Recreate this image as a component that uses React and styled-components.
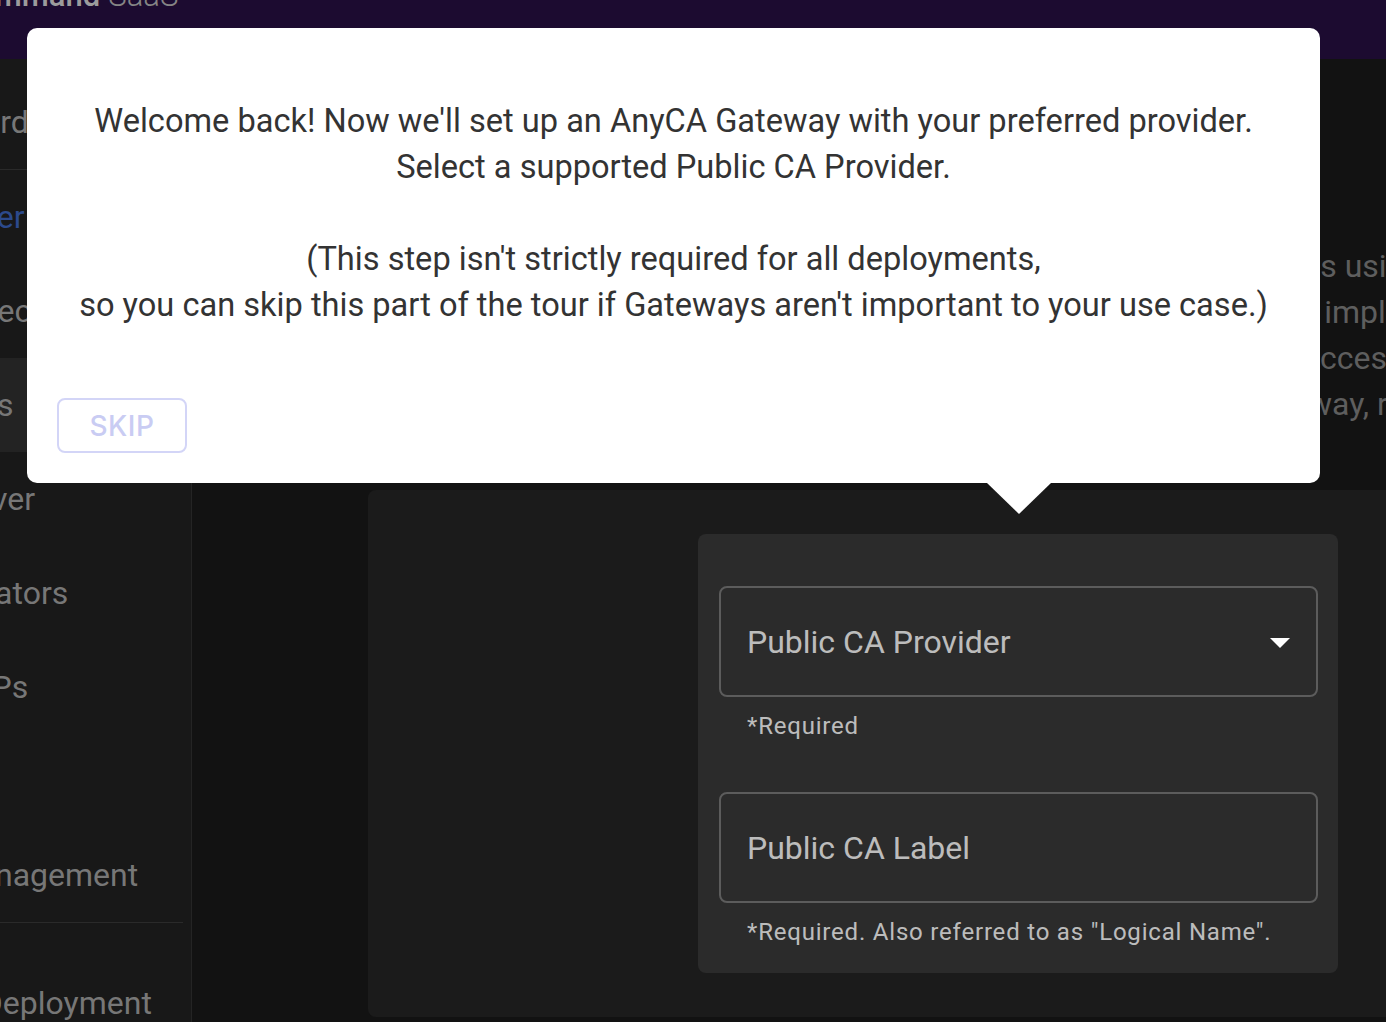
import React, { useLayoutEffect, useRef } from "react";
import styled, { createGlobalStyle } from "styled-components";

const GlobalStyle = createGlobalStyle`
  html, body { margin: 0; padding: 0; background: #121212; }
  body { font-family: Roboto, "Liberation Sans", sans-serif; }
  * { box-sizing: border-box; }
`;

const Viewport = styled.div`
  width: 100vw;
  height: 100vh;
  overflow: hidden;
  position: relative;
  background: #121212;
`;

const Page = styled.div`
  width: 1760px;
  min-height: 1100px;
  display: flex;
  flex-direction: column;
`;

const AppBar = styled.header`
  height: 128px;
  flex-shrink: 0;
  background: #1c0b30;
  display: flex;
  align-items: center;
  padding-left: 99px;
  font-family: Roboto, sans-serif;
  font-size: 31px;
`;

const BrandStrong = styled.span`
  font-weight: 500;
  color: #9c9c9c;
`;

const BrandLight = styled.span`
  font-weight: 300;
  color: #858585;
  margin-left: 8px;
`;

const Body = styled.div`
  display: flex;
  flex: 1;
`;

const Sidebar = styled.nav`
  width: 334px;
  flex-shrink: 0;
  background: #181818;
  border-right: 1px solid #242424;
  padding-top: 16px;
  display: flex;
  flex-direction: column;
`;

const NavItem = styled.div`
  height: 94px;
  display: flex;
  align-items: center;
  padding-left: 16px;
  font-size: 32px;
  white-space: nowrap;
  color: ${(p) => (p.$accent ? "#2c4a8c" : "#777777")};
  background: ${(p) => (p.$active ? "#232323" : "transparent")};
`;

const NavDivider = styled.hr`
  border: none;
  height: 1px;
  background: #2a2a2a;
  margin: 0 8px 0 0;
`;

const NavSection = styled.div`
  padding-top: 33px;
  display: flex;
  flex-direction: column;
`;

const Main = styled.main`
  flex: 1;
  background: #121212;
  padding: 64px 176px 0 176px;
  min-width: 0;
`;

const PageTitle = styled.h1`
  margin: 0;
  font-size: 48px;
  line-height: 72px;
  font-weight: 400;
  color: #8a8a8a;
`;

const Lead = styled.p`
  margin: 48px 0 0 0;
  font-size: 32px;
  line-height: 46px;
  color: #5e5e5e;
`;

const LeadLine = styled.span`
  display: block;
  white-space: nowrap;
`;

const Card = styled.section`
  margin-top: 63px;
  background: #1b1b1b;
  border-radius: 8px;
  padding: 44px 0;
  display: grid;
  grid-template-columns: 330px 640px 1fr;
`;

const FormCard = styled.div`
  grid-column: 2;
  background: #2b2b2b;
  border-radius: 8px;
  padding: 52px 20px 21px 21px;
  display: flex;
  flex-direction: column;
  gap: 46px;
`;

const FieldGroup = styled.div`
  display: flex;
  flex-direction: column;
`;

const Field = styled.div`
  height: 111px;
  border: 2px solid rgba(255, 255, 255, 0.23);
  border-radius: 8px;
  display: flex;
  align-items: center;
  justify-content: space-between;
  padding: 0 12px 0 26px;
  font-size: 32px;
  color: rgba(255, 255, 255, 0.7);
`;

const Helper = styled.div`
  margin: 9px 0 0 28px;
  font-size: 24px;
  line-height: 40px;
  letter-spacing: 0.8px;
  color: rgba(255, 255, 255, 0.7);
`;

const Tooltip = styled.div`
  position: fixed;
  top: 28px;
  left: 27px;
  width: 1293px;
  background: #ffffff;
  border-radius: 10px;
  padding: 30px;
  font-family: Roboto, sans-serif;
`;

const TooltipBody = styled.div`
  padding: 40px 10px;
  text-align: center;
  font-size: 32.6px;
  line-height: 46px;
  color: #333333;
`;

const TooltipLine = styled.span`
  display: block;
  white-space: nowrap;
  min-height: 46px;
`;

const TooltipFooter = styled.div`
  margin-top: 30px;
  display: flex;
`;

const SkipButton = styled.button`
  width: 130px;
  height: 55px;
  border: 2px solid #d3d5f7;
  border-radius: 8px;
  background: transparent;
  color: #c9ccf3;
  font-family: Inter, sans-serif;
  font-size: 28px;
  font-weight: 500;
  letter-spacing: 0.5px;
  padding: 0;
`;

const Arrow = styled.span`
  position: absolute;
  top: 100%;
  left: 960px;
  width: 0;
  height: 0;
  border-left: 32px solid transparent;
  border-right: 32px solid transparent;
  border-top: 31px solid #ffffff;
`;

const DropIcon = () => (
  <svg width="48" height="48" viewBox="0 0 24 24" fill="#ffffff">
    <path d="M7 10l5 5 5-5z" />
  </svg>
);

export default function App() {
  const ref = useRef(null);
  useLayoutEffect(() => {
    if (ref.current) {
      ref.current.scrollLeft = 142;
      ref.current.scrollTop = 69;
    }
  }, []);

  return (
    <>
      <GlobalStyle />
      <Viewport ref={ref}>
        <Page>
          <AppBar>
            <BrandStrong>Command</BrandStrong>
            <BrandLight>SaaS</BrandLight>
          </AppBar>
          <Body>
            <Sidebar>
              <NavItem>Dashboard</NavItem>
              <NavDivider />
              <NavItem $accent>PKI Center</NavItem>
              <NavItem>SSH Collections</NavItem>
              <NavItem $active>Gateways</NavItem>
              <NavItem>Web Server</NavItem>
              <NavItem>Orchestrators</NavItem>
              <NavItem>HSM CSPs</NavItem>
              <NavItem>Reports</NavItem>
              <NavItem>Alert Management</NavItem>
              <NavDivider />
              <NavSection>
                <NavItem>Staged Deployment</NavItem>
              </NavSection>
            </Sidebar>
            <Main>
              <PageTitle>Gateways</PageTitle>
              <Lead>
                <LeadLine>Connect Keyfactor Command to trusted public certificate authorities using a Gateway</LeadLine>
                <LeadLine>an AnyCA Gateway. Gateways give one standard, consistent way to implement certificate</LeadLine>
                <LeadLine>issuance across providers, with a unified point for audited, secure access to issuance</LeadLine>
                <LeadLine>to every connected CA. When you finish setting up the AnyCA Gateway, return here.</LeadLine>
              </Lead>
              <Card>
                <FormCard>
                  <FieldGroup>
                    <Field>
                      <span>Public CA Provider</span>
                      <DropIcon />
                    </Field>
                    <Helper>*Required</Helper>
                  </FieldGroup>
                  <FieldGroup>
                    <Field>
                      <span>Public CA Label</span>
                    </Field>
                    <Helper>*Required. Also referred to as "Logical Name".</Helper>
                  </FieldGroup>
                </FormCard>
              </Card>
            </Main>
          </Body>
        </Page>
        <Tooltip>
          <TooltipBody>
            <TooltipLine>Welcome back! Now we'll set up an AnyCA Gateway with your preferred provider.</TooltipLine>
            <TooltipLine>Select a supported Public CA Provider.</TooltipLine>
            <TooltipLine />
            <TooltipLine>(This step isn't strictly required for all deployments,</TooltipLine>
            <TooltipLine>so you can skip this part of the tour if Gateways aren't important to your use case.)</TooltipLine>
          </TooltipBody>
          <TooltipFooter>
            <SkipButton>SKIP</SkipButton>
          </TooltipFooter>
          <Arrow />
        </Tooltip>
      </Viewport>
    </>
  );
}
